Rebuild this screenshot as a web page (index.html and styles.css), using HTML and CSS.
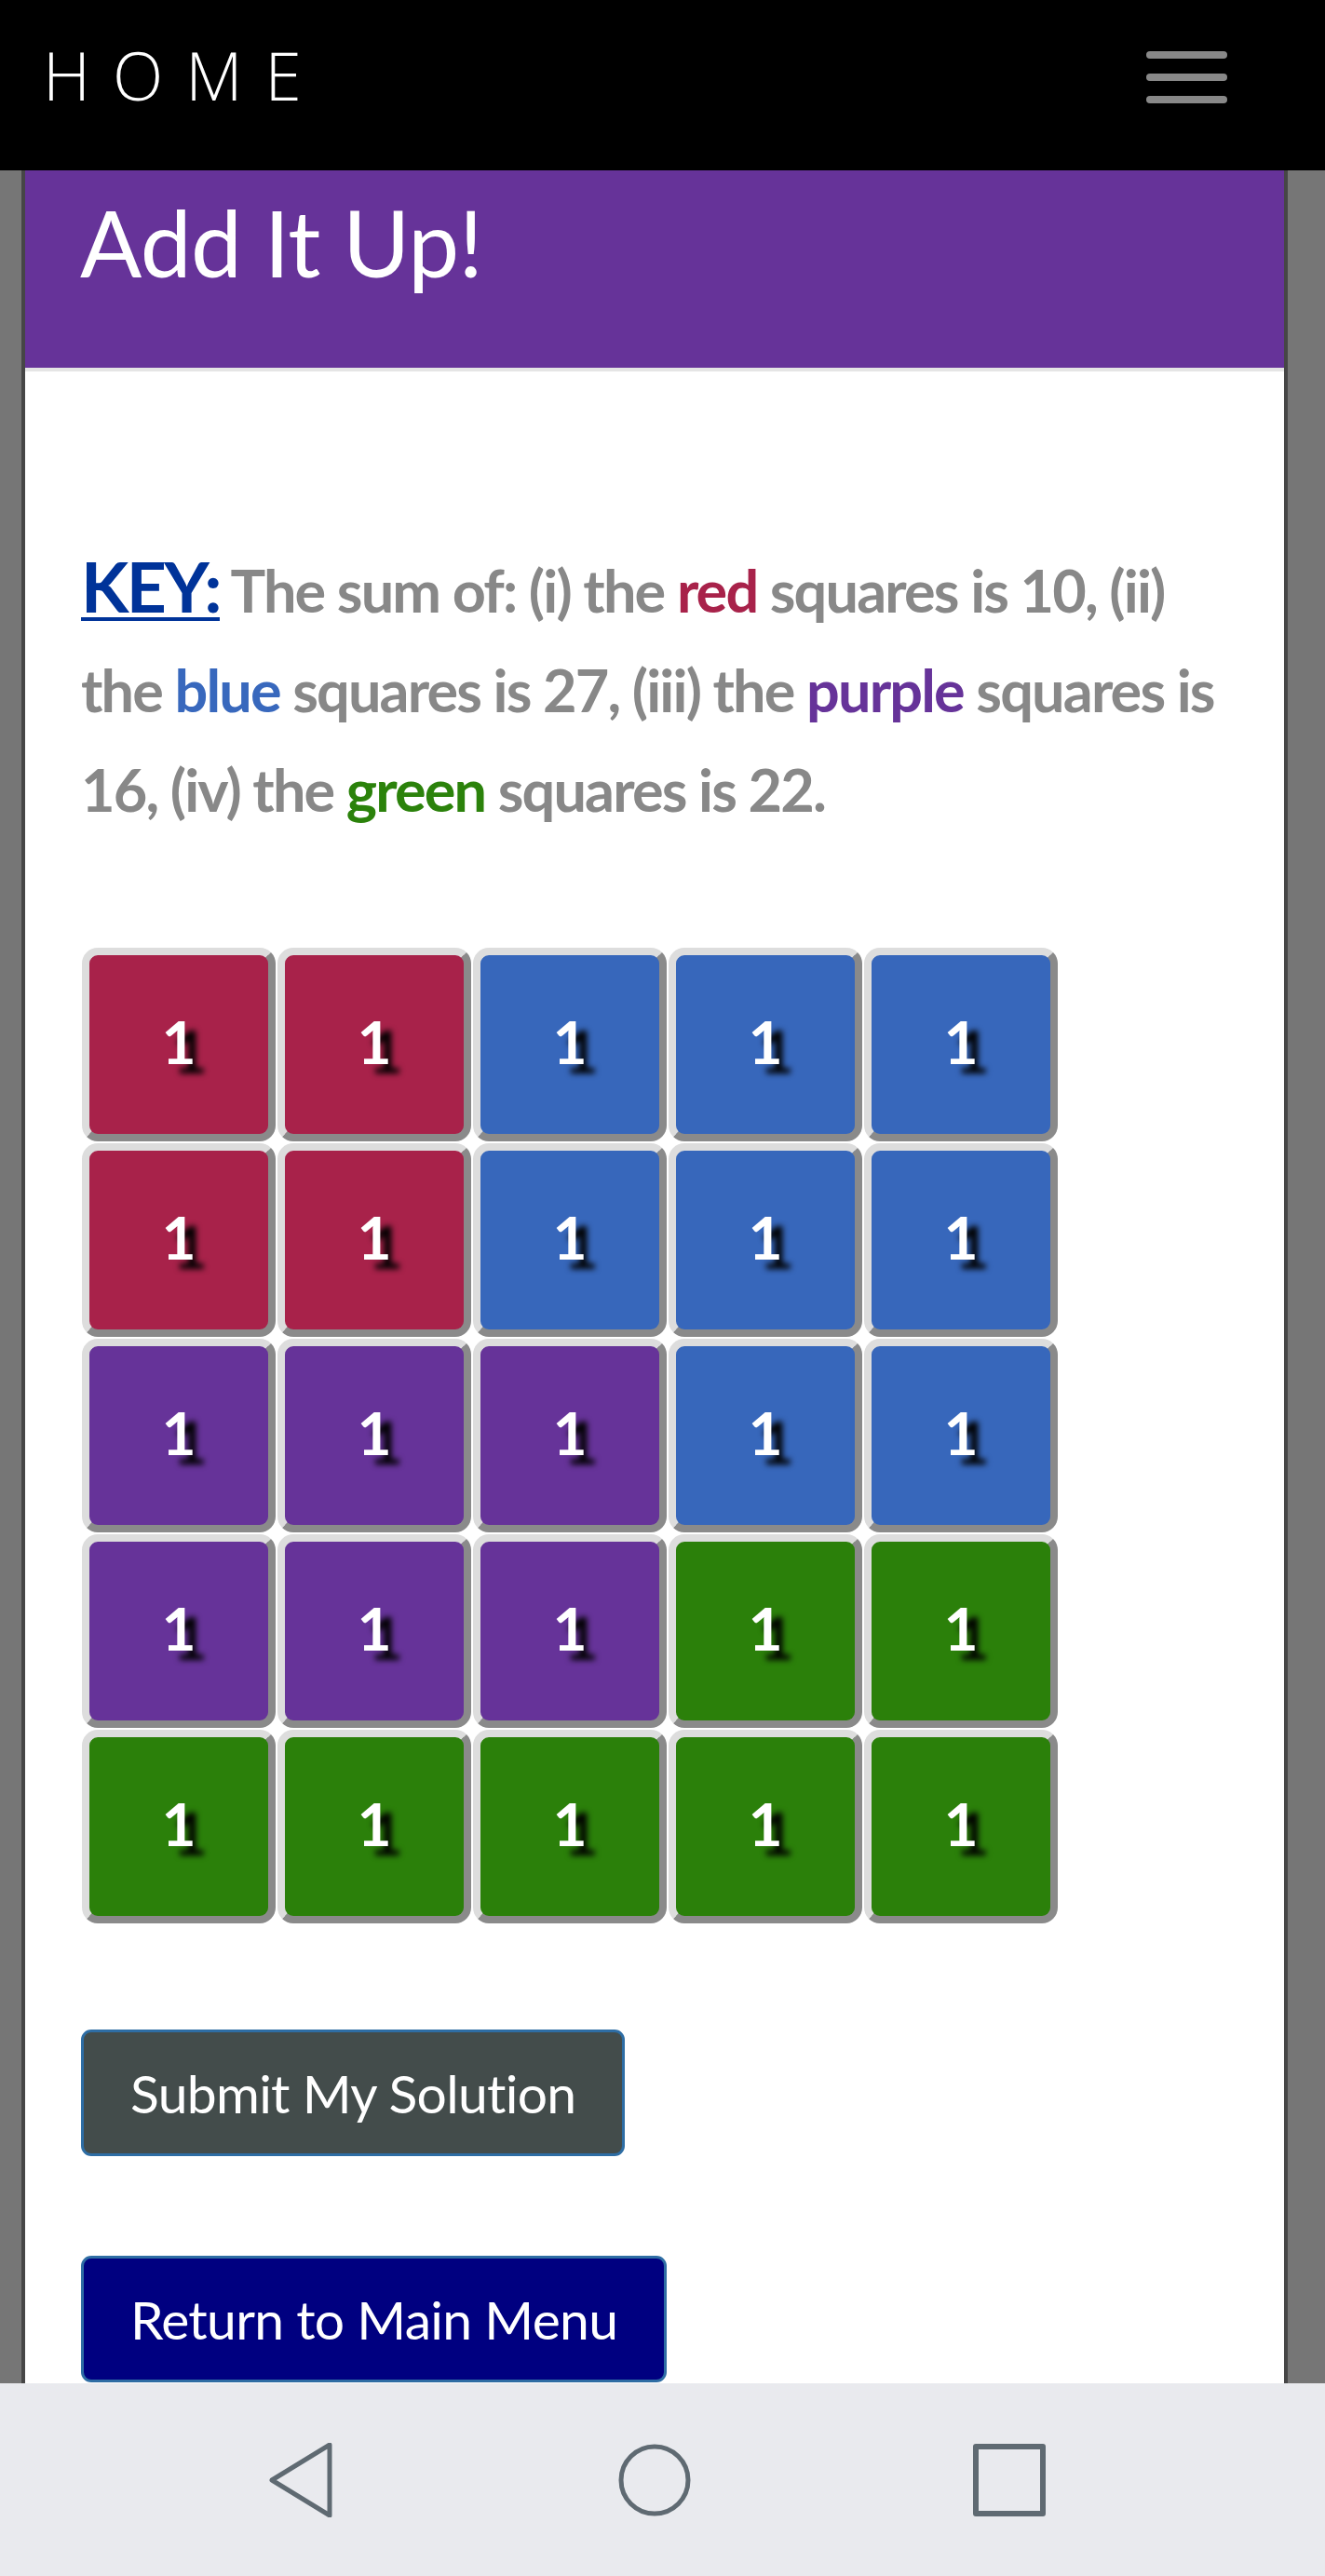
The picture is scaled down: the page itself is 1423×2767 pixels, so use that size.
FILE: index.html
```html
<!DOCTYPE html>
<html lang="en">
<head>
<meta charset="utf-8">
<title>Add It Up!</title>
<link rel="stylesheet" href="styles.css">
</head>
<body>
<header class="topbar">
  <div class="brand">HOME</div>
  <div class="burger"><span></span><span></span><span></span></div>
</header>
<main class="card">
  <div class="card-head"><h1 class="title">Add It Up!</h1></div>
  <div class="card-body">
    <p class="key"><span class="key-label">KEY:</span> The sum of: (i) the <span class="c-red">red</span> squares is 10, (ii) the <span class="c-blue">blue</span> squares is 27, (iii) the <span class="c-purple">purple</span> squares is 16, (iv) the <span class="c-green">green</span> squares is 22.</p>
    <div class="grid">
      <div class="tile red">1</div><div class="tile red">1</div><div class="tile blue">1</div><div class="tile blue">1</div><div class="tile blue">1</div>
      <div class="tile red">1</div><div class="tile red">1</div><div class="tile blue">1</div><div class="tile blue">1</div><div class="tile blue">1</div>
      <div class="tile purple">1</div><div class="tile purple">1</div><div class="tile purple">1</div><div class="tile blue">1</div><div class="tile blue">1</div>
      <div class="tile purple">1</div><div class="tile purple">1</div><div class="tile purple">1</div><div class="tile green">1</div><div class="tile green">1</div>
      <div class="tile green">1</div><div class="tile green">1</div><div class="tile green">1</div><div class="tile green">1</div><div class="tile green">1</div>
    </div>
    <button class="btn btn-submit">Submit My Solution</button>
    <button class="btn btn-return">Return to Main Menu</button>
  </div>
</main>
<nav class="sysnav">
  <svg class="navicon" viewBox="0 0 80 80" width="80" height="80"><polygon points="10,40 72,2 72,78" fill="none" stroke="#5f6a72" stroke-width="5" stroke-linejoin="round"/></svg>
  <svg class="navicon" viewBox="0 0 80 80" width="80" height="80"><circle cx="40" cy="40" r="36" fill="none" stroke="#5f6a72" stroke-width="5"/></svg>
  <svg class="navicon" viewBox="0 0 80 80" width="80" height="80"><rect x="4" y="4" width="72" height="72" fill="none" stroke="#5f6a72" stroke-width="6" stroke-linejoin="round"/></svg>
</nav>
</body>
</html>
```
FILE: styles.css
```css
html, body {
  margin: 0;
  padding: 0;
}
body {
  background: #767676;
  font-family: Lato, "Open Sans", "Liberation Sans", sans-serif;
  min-height: 2767px;
}
.topbar {
  background: #000;
  height: 183px;
  box-sizing: border-box;
  display: flex;
  justify-content: space-between;
  align-items: flex-start;
  padding: 36px 105px 0 46px;
}
.brand {
  color: #fff;
  font-family: "Open Sans", "Liberation Sans", sans-serif;
  font-weight: 300;
  font-size: 71px;
  line-height: 90px;
  letter-spacing: 24px;
}
.burger {
  display: flex;
  flex-direction: column;
  gap: 16px;
  padding-top: 19px;
}
.burger span {
  display: block;
  width: 87px;
  height: 8px;
  border-radius: 4px;
  background: #888;
}
.card {
  display: block;
  margin: 0 40px 0 23px;
  border-left: 4px solid #464646;
  border-right: 4px solid #464646;
  background: #fff;
  min-height: 2584px;
}
.card-head {
  background: #663399;
  box-sizing: border-box;
  border-bottom: 4px solid #e5e5e5;
  height: 216px;
  padding: 18px 0 0 59px;
}
.title {
  margin: 0;
  color: #fff;
  font-weight: 400;
  font-size: 98px;
  line-height: 118px;
  letter-spacing: -0.6px;
}
.card-body {
  padding: 177px 60px 0 60px;
  display: flex;
  flex-direction: column;
  align-items: flex-start;
}
.key {
  margin: 0;
  color: #888;
  font-weight: 700;
  font-size: 63px;
  line-height: 107px;
  letter-spacing: -1.85px;
}
.key-label {
  color: #003399;
  font-size: 75px;
  letter-spacing: -2.6px;
  text-decoration: underline;
  text-decoration-thickness: 4px;
  text-underline-offset: 5px;
}
.c-red { color: #a8224a; }
.c-blue { color: #3868bd; }
.c-purple { color: #663399; }
.c-green { color: #2b820b; }
.grid {
  margin-top: 116px;
  display: grid;
  grid-template-columns: repeat(5, 210px);
  grid-auto-rows: 210px;
}
.tile {
  margin: 1px;
  box-sizing: border-box;
  border: 8px solid;
  border-color: #dddddd #8a8a8a #8a8a8a #dddddd;
  border-radius: 17px;
  display: flex;
  align-items: center;
  justify-content: center;
  color: #fff;
  font-weight: 700;
  font-size: 64px;
  text-shadow: 12px 10px 6px #000;
  padding-bottom: 8px;
}
.tile.red { background: #a8224a; }
.tile.blue { background: #3767bb; }
.tile.purple { background: #663399; }
.tile.green { background: #2b800a; }
.btn {
  font-family: Lato, "Open Sans", "Liberation Sans", sans-serif;
  font-size: 57px;
  line-height: 70px;
  letter-spacing: -0.7px;
  color: #fff;
  border: 3px solid #2e6da4;
  border-radius: 11px;
  padding: 30px 50px;
  cursor: pointer;
}
.btn-submit {
  margin-top: 113px;
  background: #434c4b;
}
.btn-return {
  margin-top: 107px;
  background: #000080;
}
.sysnav {
  position: fixed;
  left: 0;
  right: 0;
  bottom: 0;
  height: 207px;
  background: #e9eaee;
  display: flex;
  align-items: center;
  padding-left: 282px;
  gap: 301px;
}
.navicon {
  display: block;
}
```
